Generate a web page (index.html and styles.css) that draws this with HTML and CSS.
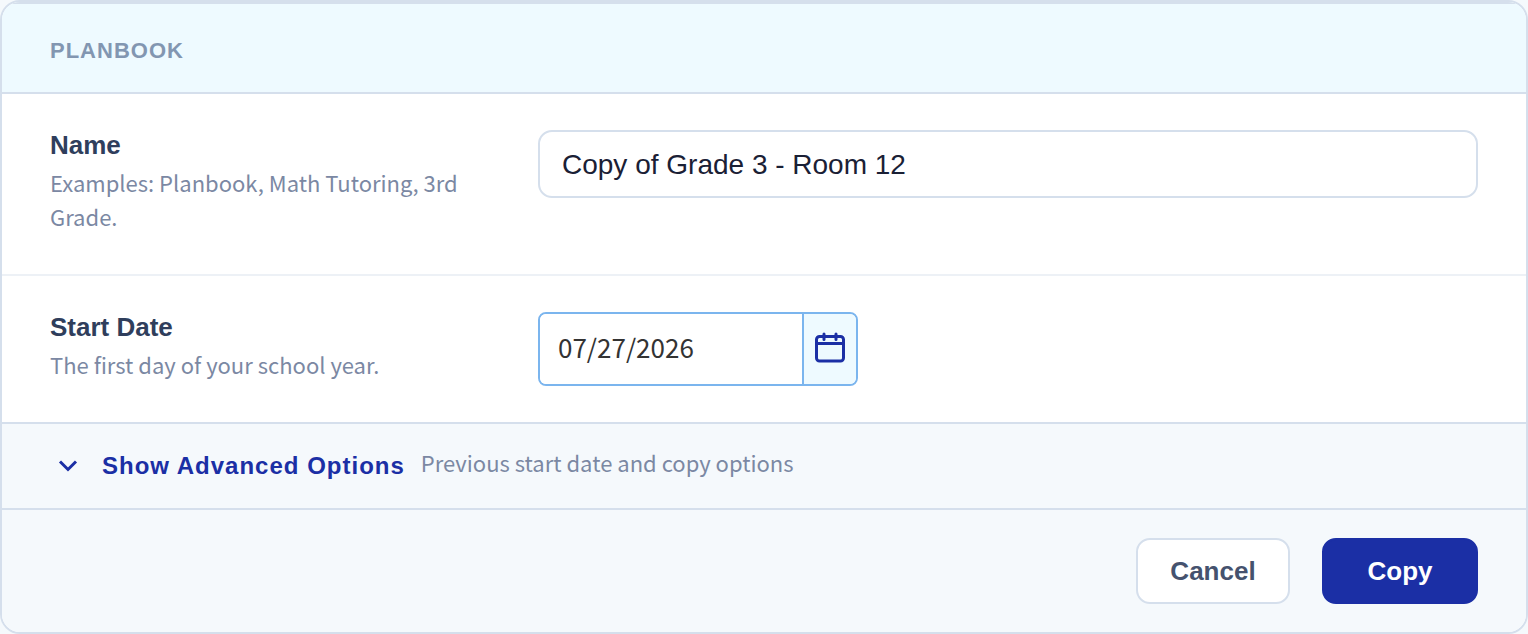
FILE: index.html
```html
<!DOCTYPE html>
<html lang="en">
  <head>
    <meta charset="UTF-8" />
    <meta name="viewport" content="width=device-width, initial-scale=1.0" />
    <title>Copy Planbook</title>
    <link rel="stylesheet" href="styles.css">
  </head>
  <body>
    <form class="card">
      <h2 class="card-header">PLANBOOK</h2>
      <div class="field-row">
        <div class="field-info">
          <label class="field-label" for="planbook-name">Name</label>
          <p class="help-text">Examples: Planbook, Math Tutoring, 3rd Grade.</p>
        </div>
        <input type="text" id="planbook-name" class="text-input" value="Copy of Grade 3 - Room 12" />
      </div>
      <div class="field-row">
        <div class="field-info">
          <label class="field-label" for="start-date">Start Date</label>
          <p class="help-text">The first day of your school year.</p>
        </div>
        <div class="date-picker">
          <input type="text" id="start-date" class="date-input" value="07/27/2026" />
          <button type="button" class="date-button" aria-label="Open calendar">
            <svg class="calendar-icon" viewBox="0 0 32 32" aria-hidden="true">
              <rect x="2.5" y="4.500" width="27" height="24.500" rx="3" />
              <path d="M3 11.500h26M10 2v5.500M22 2v5.500" />
            </svg>
          </button>
        </div>
      </div>
      <div class="advanced-row">
        <button type="button" class="advanced-toggle" aria-expanded="false">
          <svg class="chevron-icon" viewBox="0 0 20 20" aria-hidden="true">
            <path d="M2 5.500l8 8 8-8" />
          </svg>
          Show Advanced Options
        </button>
        <span class="help-text advanced-hint">Previous start date and copy options</span>
      </div>
      <div class="card-footer">
        <button type="button" class="btn btn-cancel">Cancel</button>
        <button type="submit" class="btn btn-copy">Copy</button>
      </div>
    </form>
  </body>
</html>
```
FILE: styles.css
```css
* {
  box-sizing: border-box;
}
body {
  margin: 0;
  background: #f5f9fc;
  font-family: "Liberation Sans", Arial, sans-serif;
}
button,
input {
  font-family: inherit;
}
button {
  cursor: pointer;
}
.card {
  border: 2px solid #d5dfec;
  border-radius: 20px;
  overflow: hidden;
  background: #fff;
}
.card-header {
  margin: 0;
  padding: 34px 48px 28px;
  border-top: 2px solid #d5dfec;
  border-bottom: 2px solid #d5dfec;
  background: #eefaff;
  color: #8296b1;
  font-size: 22px;
  line-height: 26px;
  letter-spacing: 1px;
}
.field-row {
  display: grid;
  grid-template-columns: 440px 1fr;
  gap: 48px;
  align-items: start;
  padding: 36px 48px;
}
.field-row + .field-row {
  border-top: 2px solid #edf1f6;
}
.field-info {
  padding-bottom: 5px;
}
.field-label {
  display: block;
  margin-bottom: 5px;
  color: #2f3e5c;
  font-size: 26px;
  font-weight: 700;
  line-height: 30px;
}
.help-text {
  margin: 0;
  color: #7b88a3;
  font-family: "Noto Sans CJK SC", sans-serif;
  font-size: 22px;
  line-height: 34px;
}
.text-input {
  width: 100%;
  height: 68px;
  padding: 2px 22px 0;
  border: 2px solid #d5dfec;
  border-radius: 14px;
  background: #fff;
  color: #1a2035;
  font-size: 28px;
}
.date-picker {
  display: flex;
  width: 320px;
  height: 74px;
  border: 2px solid #7bb5ee;
  border-radius: 8px;
  overflow: hidden;
}
.date-input {
  flex: 1;
  min-width: 0;
  padding: 0 18px 6px;
  border: none;
  color: #333;
  font-family: "Noto Sans CJK SC", sans-serif;
  font-size: 26px;
}
.date-button {
  display: flex;
  align-items: center;
  justify-content: center;
  width: 54px;
  padding: 0 0 2px;
  border: none;
  border-left: 2px solid #7bb5ee;
  background: #eefaff;
}
.calendar-icon {
  width: 32px;
  height: 32px;
  fill: none;
  stroke: #1b2fa5;
  stroke-width: 3;
  stroke-linecap: round;
}
.advanced-row {
  display: flex;
  align-items: flex-start;
  gap: 16px;
  padding: 24px 56px;
  border-top: 2px solid #d5dfec;
  background: #f5f9fc;
}
.advanced-toggle {
  display: flex;
  align-items: center;
  gap: 24px;
  padding: 0;
  border: none;
  background: none;
  color: #1b2fa5;
  font-size: 24px;
  font-weight: 700;
  line-height: 36px;
  letter-spacing: 1px;
}
.advanced-hint {
  line-height: 28px;
}
.chevron-icon {
  width: 20px;
  height: 20px;
  fill: none;
  stroke: #1b2fa5;
  stroke-width: 3;
}
.card-footer {
  display: flex;
  justify-content: flex-end;
  gap: 32px;
  padding: 28px 48px;
  border-top: 2px solid #d5dfec;
  background: #f5f9fc;
}
.btn {
  height: 66px;
  padding: 0 32px;
  border: 2px solid #d5dfec;
  border-radius: 14px;
  font-size: 26px;
  font-weight: 700;
}
.btn-cancel {
  min-width: 154px;
  background: #fff;
  color: #45526e;
}
.btn-copy {
  min-width: 156px;
  border-color: #1b2fa5;
  background: #1b2fa5;
  color: #fff;
}
```
